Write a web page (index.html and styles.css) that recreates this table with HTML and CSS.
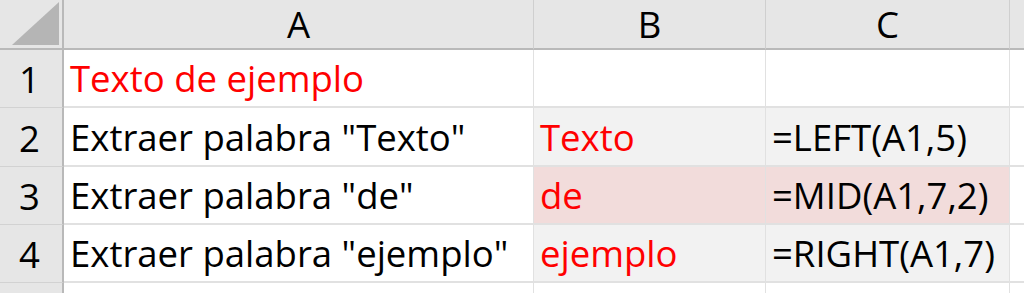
FILE: index.html
```html
<!DOCTYPE html>
<html>
<head>
<meta charset="utf-8">
<link rel="stylesheet" href="styles.css">
</head>
<body>
<div class="sheet">
  <div class="corner"><div class="tri"></div></div>
  <div class="colh">A</div>
  <div class="colh">B</div>
  <div class="colh">C</div>
  <div class="colh last"></div>

  <div class="rowh">1</div>
  <div class="cell red">Texto de ejemplo</div>
  <div class="cell"></div>
  <div class="cell"></div>
  <div class="cell edge"></div>

  <div class="rowh">2</div>
  <div class="cell">Extraer palabra "Texto"</div>
  <div class="cell red grey">Texto</div>
  <div class="cell grey">=LEFT(A1,5)</div>
  <div class="cell edge"></div>

  <div class="rowh">3</div>
  <div class="cell">Extraer palabra "de"</div>
  <div class="cell red pink">de</div>
  <div class="cell pink">=MID(A1,7,2)</div>
  <div class="cell edge"></div>

  <div class="rowh">4</div>
  <div class="cell">Extraer palabra "ejemplo"</div>
  <div class="cell red grey">ejemplo</div>
  <div class="cell grey">=RIGHT(A1,7)</div>
  <div class="cell edge"></div>

  <div class="rowh"></div>
  <div class="cell"></div>
  <div class="cell"></div>
  <div class="cell"></div>
  <div class="cell edge"></div>
</div>
</body>
</html>
```

FILE: styles.css
```css
html, body {
  margin: 0;
  padding: 0;
  background: #ffffff;
}
body {
  width: 1024px;
  height: 293px;
  overflow: hidden;
  font-family: "Open Sans", Lato, "Liberation Sans", sans-serif;
}
.sheet {
  display: grid;
  grid-template-columns: 64px 470px 232px 244px 14px;
  grid-template-rows: 50px 58px 59px 58px 58px 20px;
}
.sheet > div {
  box-sizing: border-box;
  line-height: 1;
}
.corner {
  background: #e6e6e6;
  border-right: 2px solid #b9b9b9;
  border-bottom: 2px solid #b9b9b9;
  padding: 2px 3px 3px 12px;
}
.tri {
  width: 100%;
  height: 100%;
  background: #b5b5b5;
  clip-path: polygon(100% 0, 100% 100%, 0 100%);
}
.colh {
  background: #e6e6e6;
  border-right: 1px solid #cfcfcf;
  border-bottom: 2px solid #b9b9b9;
  display: flex;
  align-items: center;
  justify-content: center;
  font-size: 36.5px;
  color: #000;
  padding-top: 1px;
}
.colh.last {
  border-right: none;
}
.rowh {
  background: #e6e6e6;
  border-right: 2px solid #b9b9b9;
  border-bottom: 1px solid #d2d2d2;
  display: flex;
  align-items: flex-end;
  justify-content: center;
  font-size: 36.5px;
  color: #000;
  padding-bottom: 10px;
  padding-right: 3px;
}
.cell {
  border-right: 1px solid #e1e1e1;
  border-bottom: 2px solid #e1e1e1;
  display: flex;
  align-items: flex-end;
  font-size: 36.5px;
  color: #000;
  padding: 0 0 10px 6px;
  white-space: nowrap;
}
.cell.edge {
  border-right: none;
}
.red {
  color: #ff0000;
}
.grey {
  background: #f2f2f2;
}
.pink {
  background: #f2dcdb;
}
```
